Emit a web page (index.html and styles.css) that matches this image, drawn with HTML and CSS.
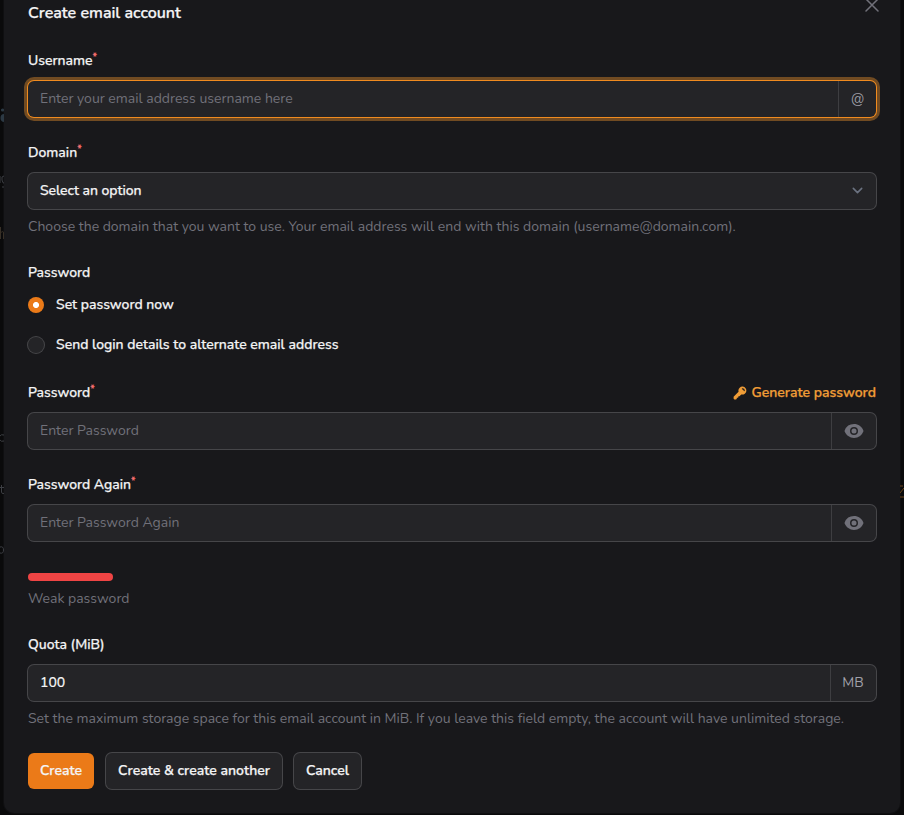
FILE: index.html
```html
<!DOCTYPE html>
<html lang="en">
<head>
<meta charset="utf-8">
<title>Create email account</title>
<link rel="stylesheet" href="styles.css">
</head>
<body>
<div class="backdrop backdrop-left" aria-hidden="true">
  <svg class="peek peek-dots" viewBox="0 0 4 14"><circle cx="2.5" cy="2" r="1.6"/><circle cx="4.5" cy="10" r="4"/></svg>
  <svg class="peek peek-g" viewBox="0 0 4 14"><path d="M4 2Q1 2 2 6T4 9M2 13h2M0 2v7"/></svg>
  <svg class="peek peek-h" viewBox="0 0 4 14"><path d="M.5 0v12M.5 6Q3.500 3 3.500 6v6"/></svg>
  <svg class="peek peek-c" viewBox="0 0 4 14"><path d="M0 5q1-2 4-1M0 9q1 2 4 1"/></svg>
  <svg class="peek peek-t" viewBox="0 0 4 14"><path d="M1.500 1v7q0 2 2.500 1.500M0 3.500h4"/></svg>
  <svg class="peek peek-p" viewBox="0 0 4 14"><path d="M0 4q3.500-1 3.500 3T0 10"/></svg>
</div>
<main class="modal">
  <header class="modal-header">
    <h1>Create email account</h1>
    <svg class="close" viewBox="0 0 24 24" fill="none" stroke="currentColor" stroke-width="1.5" stroke-linecap="round"><path d="M6 18 18 6M6 6l12 12"/></svg>
  </header>
  <form class="form">
    <div class="field">
      <div class="label"><span>Username</span><sup>*</sup></div>
      <div class="control focused"><span class="value placeholder">Enter your email address username here</span><span class="suffix suffix-at">@</span></div>
    </div>
    <div class="field">
      <div class="label"><span>Domain</span><sup>*</sup></div>
      <div class="control"><span class="value select">Select an option</span>
        <svg class="chevron" viewBox="0 0 20 20" fill="none" stroke="currentColor" stroke-width="1.5" stroke-linecap="round" stroke-linejoin="round"><path d="m6 8 4 4 4-4"/></svg></div>
      <p class="hint">Choose the domain that you want to use. Your email address will end with this domain (username@domain.com).</p>
    </div>
    <div class="field">
      <div class="label"><span>Password</span></div>
      <div class="radios">
        <div class="option"><i class="radio checked"></i><span>Set password now</span></div>
        <div class="option"><i class="radio"></i><span>Send login details to alternate email address</span></div>
      </div>
    </div>
    <div class="field">
      <div class="label"><span>Password</span><sup>*</sup>
        <a class="generate"><svg class="key" viewBox="0 0 20 20" fill="currentColor"><path fill-rule="evenodd" clip-rule="evenodd" d="M8 7a5 5 0 1 1 3.61 4.804l-1.903 1.903A1 1 0 0 1 9 14H8v1a1 1 0 0 1-1 1H6v1a1 1 0 0 1-1 1H3a1 1 0 0 1-1-1v-2a1 1 0 0 1 .293-.707L8.196 8.39A5.002 5.002 0 0 1 8 7Zm5-3a.75.75 0 0 0 0 1.5A1.5 1.5 0 0 1 14.5 7 .75.75 0 0 0 16 7a3 3 0 0 0-3-3Z"/></svg><span>Generate password</span></a>
      </div>
      <div class="control"><span class="value placeholder">Enter Password</span><span class="suffix suffix-eye"><svg class="eye" viewBox="0 0 20 20" fill="currentColor"><path d="M10 12.5a2.5 2.5 0 1 0 0-5 2.5 2.5 0 0 0 0 5Z"/><path fill-rule="evenodd" clip-rule="evenodd" d="M.664 10.59a1.651 1.651 0 0 1 0-1.186A10.004 10.004 0 0 1 10 3c4.257 0 7.893 2.66 9.336 6.41.147.381.146.804 0 1.186A10.004 10.004 0 0 1 10 17c-4.257 0-7.893-2.66-9.336-6.41ZM14 10a4 4 0 1 1-8 0 4 4 0 0 1 8 0Z"/></svg></span></div>
    </div>
    <div class="field">
      <div class="label"><span>Password Again</span><sup>*</sup></div>
      <div class="control"><span class="value placeholder">Enter Password Again</span><span class="suffix suffix-eye"><svg class="eye" viewBox="0 0 20 20" fill="currentColor"><path d="M10 12.5a2.5 2.5 0 1 0 0-5 2.5 2.5 0 0 0 0 5Z"/><path fill-rule="evenodd" clip-rule="evenodd" d="M.664 10.59a1.651 1.651 0 0 1 0-1.186A10.004 10.004 0 0 1 10 3c4.257 0 7.893 2.66 9.336 6.41.147.381.146.804 0 1.186A10.004 10.004 0 0 1 10 17c-4.257 0-7.893-2.66-9.336-6.41ZM14 10a4 4 0 1 1-8 0 4 4 0 0 1 8 0Z"/></svg></span></div>
    </div>
    <div class="strength"><div class="bar"></div><p class="hint">Weak password</p></div>
    <div class="field">
      <div class="label"><span>Quota (MiB)</span></div>
      <div class="control"><span class="value amount">100</span><span class="suffix suffix-mb">MB</span></div>
      <p class="hint">Set the maximum storage space for this email account in MiB. If you leave this field empty, the account will have unlimited storage.</p>
    </div>
    <div class="actions">
      <button type="button" class="btn primary">Create</button>
      <button type="button" class="btn another">Create &amp; create another</button>
      <button type="button" class="btn cancel">Cancel</button>
    </div>
  </form>
</main>
<div class="backdrop backdrop-right" aria-hidden="true"><svg class="peek-edit" viewBox="0 0 4 13" fill="none" stroke="currentColor"><path d="M0 1h3M0 8l4-5M0 12h4"/></svg></div>
</body>
</html>
```
FILE: styles.css
```css
* { box-sizing: border-box; }
body {
  margin: 0;
  height: 815px;
  overflow: hidden;
  display: flex;
  background: #0a0a0b;
  color: #f4f4f5;
  font: 500 14px/24px Nunito, Lato, sans-serif;
}
h1, p { margin: 0; }
.backdrop { position: relative; width: 4px; height: 815px; overflow: hidden; flex: none; }
.peek { position: absolute; left: 0; width: 4px; height: 14px; fill: none; stroke: #3d3f44; }
.peek-dots { top: 108px; fill: #2c3944; stroke: none; }
.peek-g { top: 174px; }
.peek-h { top: 227px; stroke: #383027; }
.peek-c { top: 431px; }
.peek-t { top: 484px; }
.peek-p { top: 543px; }
.peek-edit { position: absolute; left: 0; top: 485px; width: 4px; height: 13px; color: #6a431a; }
.modal {
  width: 896px;
  height: 813px;
  padding: 0 24px 24px;
  background: #18181b;
  border-radius: 0 0 10px 10px;
  box-shadow: 0 0 0 1px #0f0f11;
}
.modal-header { display: flex; justify-content: space-between; height: 25px; }
h1 { font-size: 16px; line-height: 27px; font-weight: 600; }
.close { width: 24px; height: 24px; margin: -7px -8px 0 0; color: #71717a; }
.form { display: flex; flex-direction: column; gap: 24px; padding-top: 24px; }
.field { display: flex; flex-direction: column; gap: 8px; }
.label { display: flex; height: 24px; line-height: 23px; }
h1, .label > span, .option, .select, .btn, .generate { -webkit-text-stroke: 0.25px currentColor; }
sup { color: #f87171; font-size: 10px; line-height: 12px; margin-top: 2px; -webkit-text-stroke: 0.3px currentColor; }
.control {
  display: flex;
  align-items: center;
  height: 36px;
  border-radius: 6px;
  background: #242427;
  box-shadow: 0 0 0 1px #464649;
}
.focused { box-shadow: 0 0 0 1px #f08b1f, 0 0 0 4px #714b22; }
.value { flex: 1; padding-left: 12px; line-height: 36px; height: 37px; }
.select { letter-spacing: -0.05px; }
.amount { -webkit-text-stroke: 0.15px currentColor; }
.placeholder { color: #71717a; font-weight: 400; }
.suffix {
  display: flex;
  align-items: center;
  justify-content: center;
  height: 36px;
  border-left: 1px solid #3e3e41;
  color: #a1a1aa;
  font-weight: 400;
}
.suffix-at { width: 38px; }
.suffix-eye { width: 45px; color: #71717a; }
.suffix-mb { width: 46px; padding-right: 1px; }
.chevron { width: 21px; height: 21px; margin: 0 8px 1px 0; color: #6b7280; }
.eye { width: 20px; height: 20px; }
.hint { color: #71717a; font-weight: 400; line-height: 20px; height: 20px; white-space: nowrap; letter-spacing: -0.005px; }
.radios { display: flex; flex-direction: column; gap: 16px; }
.option { display: flex; gap: 12px; align-items: center; height: 24px; line-height: 24px; }
.option span { height: 25px; }
.radio { width: 16px; height: 16px; border-radius: 50%; background: #242427; box-shadow: 0 0 0 1px #464649; }
.radio.checked { background: radial-gradient(circle, #fff 2.7px, #eb7a18 3.3px); box-shadow: none; }
.generate { display: flex; align-items: center; gap: 4px; margin-left: auto; color: #f09d37; font-weight: 600; }
.generate span { height: 24px; line-height: 23px; }
.key { width: 16px; height: 16px; }
.strength { padding-top: 8px; height: 44px; }
.bar { width: 85px; height: 8px; border-radius: 4px; background: #ef4444; margin-bottom: 8px; }
.actions { display: flex; gap: 12px; }
.btn {
  height: 36px;
  padding: 0 0 1px;
  border: 0;
  border-radius: 6px;
  background: #242427;
  box-shadow: 0 0 0 1px #464649;
  color: #f4f4f5;
  font: 600 14px/34px Nunito, Lato, sans-serif;
}
.primary { width: 66px; background: #eb7a18; box-shadow: none; }
.another { width: 176px; }
.cancel { width: 67px; }
```
